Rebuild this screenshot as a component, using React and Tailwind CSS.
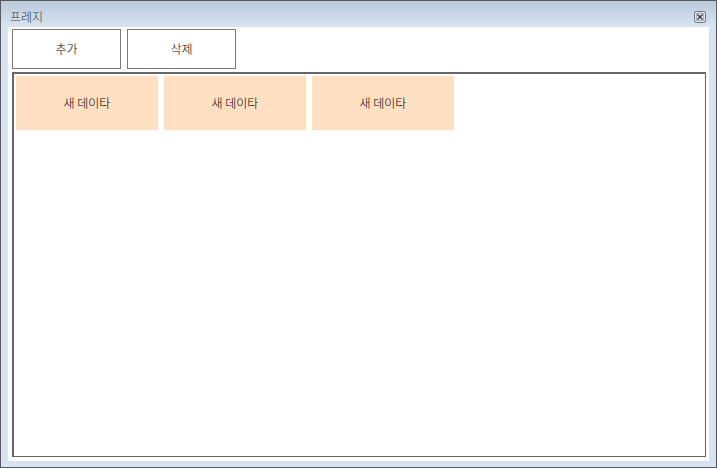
import React, { useState } from 'react';

const FONT = { fontFamily: '"Noto Sans CJK KR", "Noto Sans", sans-serif' };

const CloseIcon = () => (
  <svg width="12" height="12" viewBox="0 0 12 12" className="block">
    <rect x="0.5" y="0.5" width="11" height="11" rx="2" fill="#dfe6ee" stroke="#6b7480" />
    <rect x="2.5" y="2.5" width="7" height="7" fill="none" stroke="#a8b0ba" />
    <path d="M3.5 3.5 L8.5 8.5 M8.5 3.5 L3.5 8.5" stroke="#333" strokeWidth="1.2" />
  </svg>
);

const App = () => {
  const [items, setItems] = useState(['새 데이타', '새 데이타', '새 데이타']);

  const handleAdd = () => setItems((prev) => [...prev, '새 데이타']);
  const handleDelete = () => setItems((prev) => prev.slice(0, -1));

  return (
    <div className="w-[717px] h-[468px] bg-white font-light" style={FONT}>
      <div className="w-full h-full border border-[#5a5a5a] flex flex-col bg-[#d7e3f1]">
        {/* Title bar */}
        <div className="h-[26px] flex items-center justify-between pl-[9px] pr-[10px] pt-[5px] bg-gradient-to-b from-[#b9cadc] to-[#d9e4f1]">
          <span className="text-[12px] leading-none text-[#3a3a3a]">프레지</span>
          <CloseIcon />
        </div>

        {/* Body */}
        <div className="flex-1 mx-[7px] mb-[6px] bg-white flex flex-col pt-[2px] pl-[4px] pr-[3px] pb-[4px] min-h-0">
          <div className="flex gap-[6px]">
            <button
              onClick={handleAdd}
              className="w-[109px] h-[40px] border border-[#7a7a7a] bg-white text-[12px] text-black"
            >
              추가
            </button>
            <button
              onClick={handleDelete}
              className="w-[109px] h-[40px] border border-[#7a7a7a] bg-white text-[12px] text-black"
            >
              삭제
            </button>
          </div>

          <div className="flex-1 mt-[3px] border-t-2 border-l-2 border-r border-b border-[#666] bg-white p-[2px] flex flex-wrap content-start gap-[6px] min-h-0">
            {items.map((label, i) => (
              <div
                key={i}
                className="w-[142px] h-[54px] bg-[#ffe0c2] flex items-center justify-center text-[12px] text-black"
              >
                {label}
              </div>
            ))}
          </div>
        </div>
      </div>
    </div>
  );
};

export default App;
